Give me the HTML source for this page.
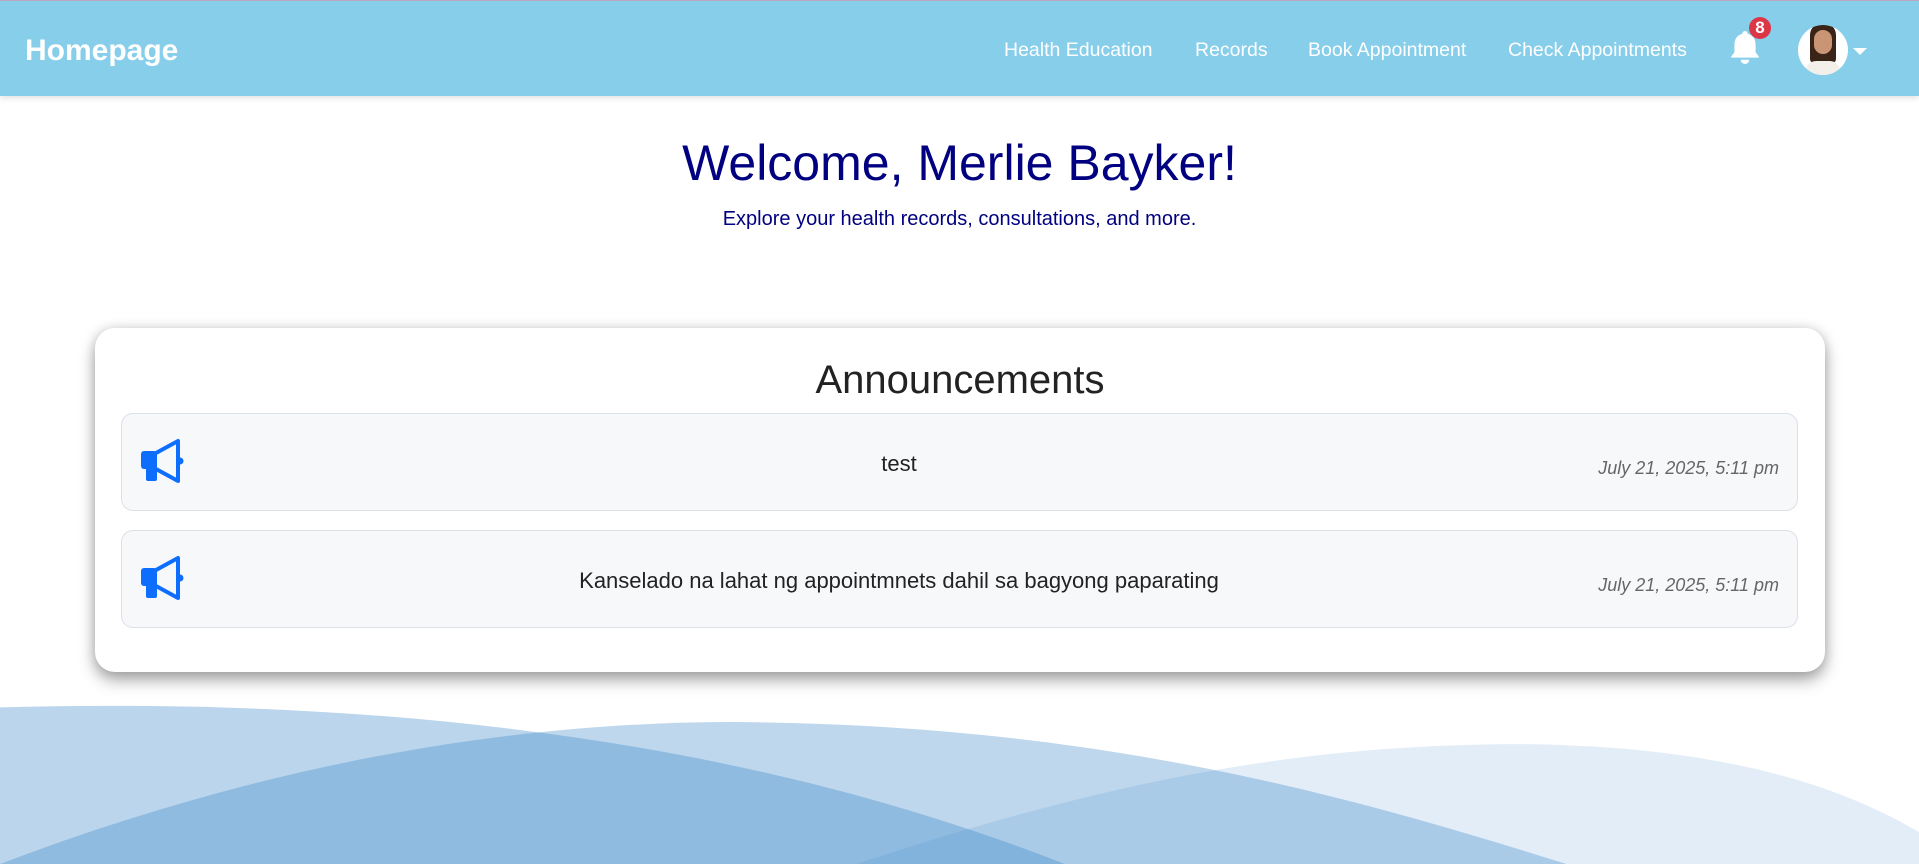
<!DOCTYPE html>
<html><head><meta charset="utf-8"><style>
*{box-sizing:border-box;margin:0;padding:0}
body{width:1919px;height:864px;overflow:hidden;background:#fff;font-family:"Liberation Sans",Arial,sans-serif;position:relative}
.nav{position:absolute;left:0;top:0;width:1919px;height:96px;background:#87ceeb;box-shadow:0 2px 6px rgba(0,0,0,.12);border-top:1px solid #b9a9c0}
.brand{position:absolute;left:25px;top:33px;font-size:30px;font-weight:bold;color:#fff}
.link{position:absolute;top:38px;font-size:19.5px;color:#fff}
.waves{position:absolute;left:0;top:0}
h1{position:absolute;left:0;width:1919px;text-align:center;top:134px;font-size:50px;font-weight:normal;color:#000080}
.sub{position:absolute;left:0;width:1919px;text-align:center;top:208px;font-size:20px;color:#000080}
.card{position:absolute;left:95px;top:328px;width:1730px;height:344px;background:#fff;border-radius:20px;box-shadow:0 8px 16px rgba(0,0,0,.35),0 0 12px rgba(0,0,0,.12)}
.card h2{position:absolute;left:0;width:100%;text-align:center;top:30px;font-size:40px;font-weight:normal;color:#222}
.item{position:absolute;left:26px;width:1677px;height:98px;background:#f7f8fa;border:1px solid #dde0e4;border-radius:12px}
.item .t{position:absolute;left:0;width:1554px;text-align:center;top:37px;font-size:22px;color:#222}
.item .d{position:absolute;right:18px;top:44px;font-size:18px;font-style:italic;color:#666}
.item svg{position:absolute;left:0;top:0}
</style></head><body>
<svg class="waves" width="1919" height="864" viewBox="0 0 1568 706" preserveAspectRatio="none">
<path d="M0,578 C300,570 600,600 870,706 L0,706 Z" fill="#3a87c8" fill-opacity=".35"/>
<path d="M0,706 C200,630 400,590 600,590 C900,592 1100,650 1280,706 Z" fill="#3a87c8" fill-opacity=".33"/>
<path d="M700,706 C900,640 1050,610 1230,608 C1400,608 1500,640 1568,680 L1568,706 Z" fill="#3a87c8" fill-opacity=".15"/>
</svg>
<div class="nav">
<div class="brand">Homepage</div>
<div class="link" style="left:1004px">Health Education</div>
<div class="link" style="left:1195px">Records</div>
<div class="link" style="left:1308px">Book Appointment</div>
<div class="link" style="left:1508px">Check Appointments</div>
<svg style="position:absolute;left:1728px;top:28px" width="34" height="36" viewBox="0 0 32 34"><path d="M16 2c-1.5 0-2.5 1-2.5 2.5C8 6 6 10 6 15v7l-3 4v1h26v-1l-3-4v-7c0-5-2-9-7.5-10.5C18.5 3 17.5 2 16 2z" fill="#fff"/><path d="M12 29h8a4 4 0 0 1-8 0z" fill="#fff"/></svg>
<div style="position:absolute;left:1749px;top:16px;width:22px;height:22px;border-radius:50%;background:#dc3545;color:#fff;font-size:17px;font-weight:bold;text-align:center;line-height:22px">8</div>
<div style="position:absolute;left:1798px;top:24px;width:50px;height:50px;border-radius:50%;background:#fff;overflow:hidden">
<div style="position:absolute;left:12px;top:-2px;width:26px;height:40px;background:#3a2418;border-radius:12px 12px 4px 4px"></div>
<div style="position:absolute;left:16px;top:5px;width:18px;height:24px;background:#c99574;border-radius:9px"></div>
<div style="position:absolute;left:8px;top:36px;width:34px;height:20px;background:#f3efe9;border-radius:10px 10px 0 0"></div>
</div>
<div style="position:absolute;left:1853px;top:47px;width:0;height:0;border-left:7px solid transparent;border-right:7px solid transparent;border-top:7px solid #fff"></div>
</div>
<h1>Welcome, Merlie Bayker!</h1>
<div class="sub">Explore your health records, consultations, and more.</div>
<div class="card">
<h2>Announcements</h2>
<div class="item" style="top:85px"><svg width="70" height="98"><rect x="19" y="37" width="16" height="18" rx="3" fill="#0d6efd"/><rect x="24" y="45" width="11" height="22" rx="2" fill="#0d6efd"/><path d="M34 39 L56 27 L56 67 L34 55" fill="none" stroke="#0d6efd" stroke-width="4" stroke-linejoin="round"/><circle cx="58" cy="47" r="3.5" fill="#0d6efd"/></svg><div class="t">test</div><div class="d">July 21, 2025, 5:11 pm</div></div>
<div class="item" style="top:202px"><svg width="70" height="98"><rect x="19" y="37" width="16" height="18" rx="3" fill="#0d6efd"/><rect x="24" y="45" width="11" height="22" rx="2" fill="#0d6efd"/><path d="M34 39 L56 27 L56 67 L34 55" fill="none" stroke="#0d6efd" stroke-width="4" stroke-linejoin="round"/><circle cx="58" cy="47" r="3.5" fill="#0d6efd"/></svg><div class="t">Kanselado na lahat ng appointmnets dahil sa bagyong paparating</div><div class="d">July 21, 2025, 5:11 pm</div></div>
</div>
</body></html>
